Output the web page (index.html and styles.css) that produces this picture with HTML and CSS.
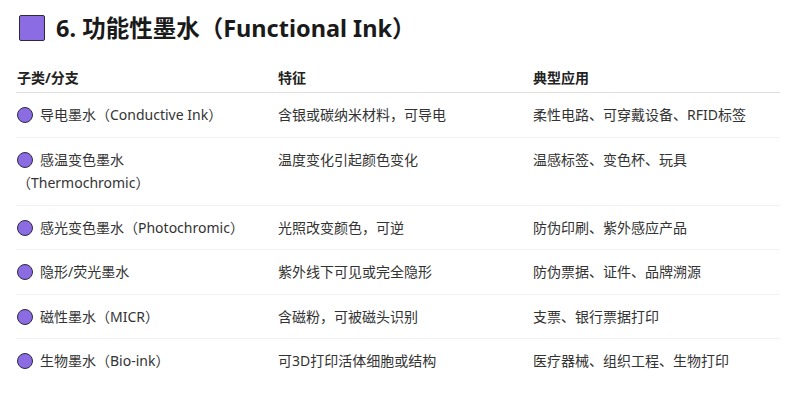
FILE: index.html
```html
<!DOCTYPE html>
<html lang="zh">
<head>
<meta charset="utf-8">
<title>功能性墨水</title>
<link rel="stylesheet" href="styles.css">
</head>
<body>
<div class="page">
  <h2 class="title"><span class="sq"></span><span>6. 功能性墨水（Functional Ink）</span></h2>
  <table class="tbl">
    <colgroup><col class="c1"><col class="c2"><col class="c3"></colgroup>
    <thead>
      <tr><th>子类/分支</th><th>特征</th><th>典型应用</th></tr>
    </thead>
    <tbody>
      <tr><td><span class="dot"></span>导电墨水（Conductive Ink）</td><td>含银或碳纳米材料，可导电</td><td>柔性电路、可穿戴设备、RFID标签</td></tr>
      <tr><td><span class="dot"></span>感温变色墨水<br>（Thermochromic）</td><td>温度变化引起颜色变化</td><td>温感标签、变色杯、玩具</td></tr>
      <tr><td><span class="dot"></span>感光变色墨水（Photochromic）</td><td>光照改变颜色，可逆</td><td>防伪印刷、紫外感应产品</td></tr>
      <tr><td><span class="dot"></span>隐形/荧光墨水</td><td>紫外线下可见或完全隐形</td><td>防伪票据、证件、品牌溯源</td></tr>
      <tr><td><span class="dot"></span>磁性墨水（MICR）</td><td>含磁粉，可被磁头识别</td><td>支票、银行票据打印</td></tr>
      <tr><td><span class="dot"></span>生物墨水（Bio-ink）</td><td>可3D打印活体细胞或结构</td><td>医疗器械、组织工程、生物打印</td></tr>
    </tbody>
  </table>
</div>
</body>
</html>
```

FILE: styles.css
```css
* { box-sizing: border-box; }
html, body { margin: 0; padding: 0; background: #fff; }
body {
  font-family: "Noto Sans", "Noto Sans CJK SC", sans-serif;
  color: #333;
}
.page { padding: 14px 20px 0 16px; }
.title {
  margin: 0 0 16px 0;
  display: flex;
  align-items: center;
  gap: 11px;
  font-size: 23.5px;
  line-height: 28px;
  font-weight: 700;
  color: #1a1a1a;
  padding-left: 3px;
}
.sq {
  width: 26px;
  height: 26px;
  background: #8c6ce2;
  border: 1.5px solid #2a2a3a;
  border-radius: 2px;
  flex: none;
}
.tbl {
  width: 764px;
  border-collapse: collapse;
  table-layout: fixed;
  font-size: 14px;
  line-height: 23.5px;
}
.c1 { width: 261px; }
.c2 { width: 255px; }
.c3 { width: 248px; }
.tbl th {
  text-align: left;
  font-weight: 700;
  color: #222;
  line-height: 24px;
  padding: 8px 16px 2px 1px;
  border-bottom: 1px solid #dedede;
}
.tbl td {
  padding: 10px 16px 10px 1px;
  border-bottom: 1px solid #f0f0f0;
  vertical-align: top;
}
.tbl tbody tr:last-child td { border-bottom: none; }
.dot {
  display: inline-block;
  width: 16px;
  height: 16px;
  border-radius: 50%;
  background: #8c6ce2;
  border: 1.5px solid #2e2a40;
  vertical-align: -3px;
  margin-right: 7px;
}
```
